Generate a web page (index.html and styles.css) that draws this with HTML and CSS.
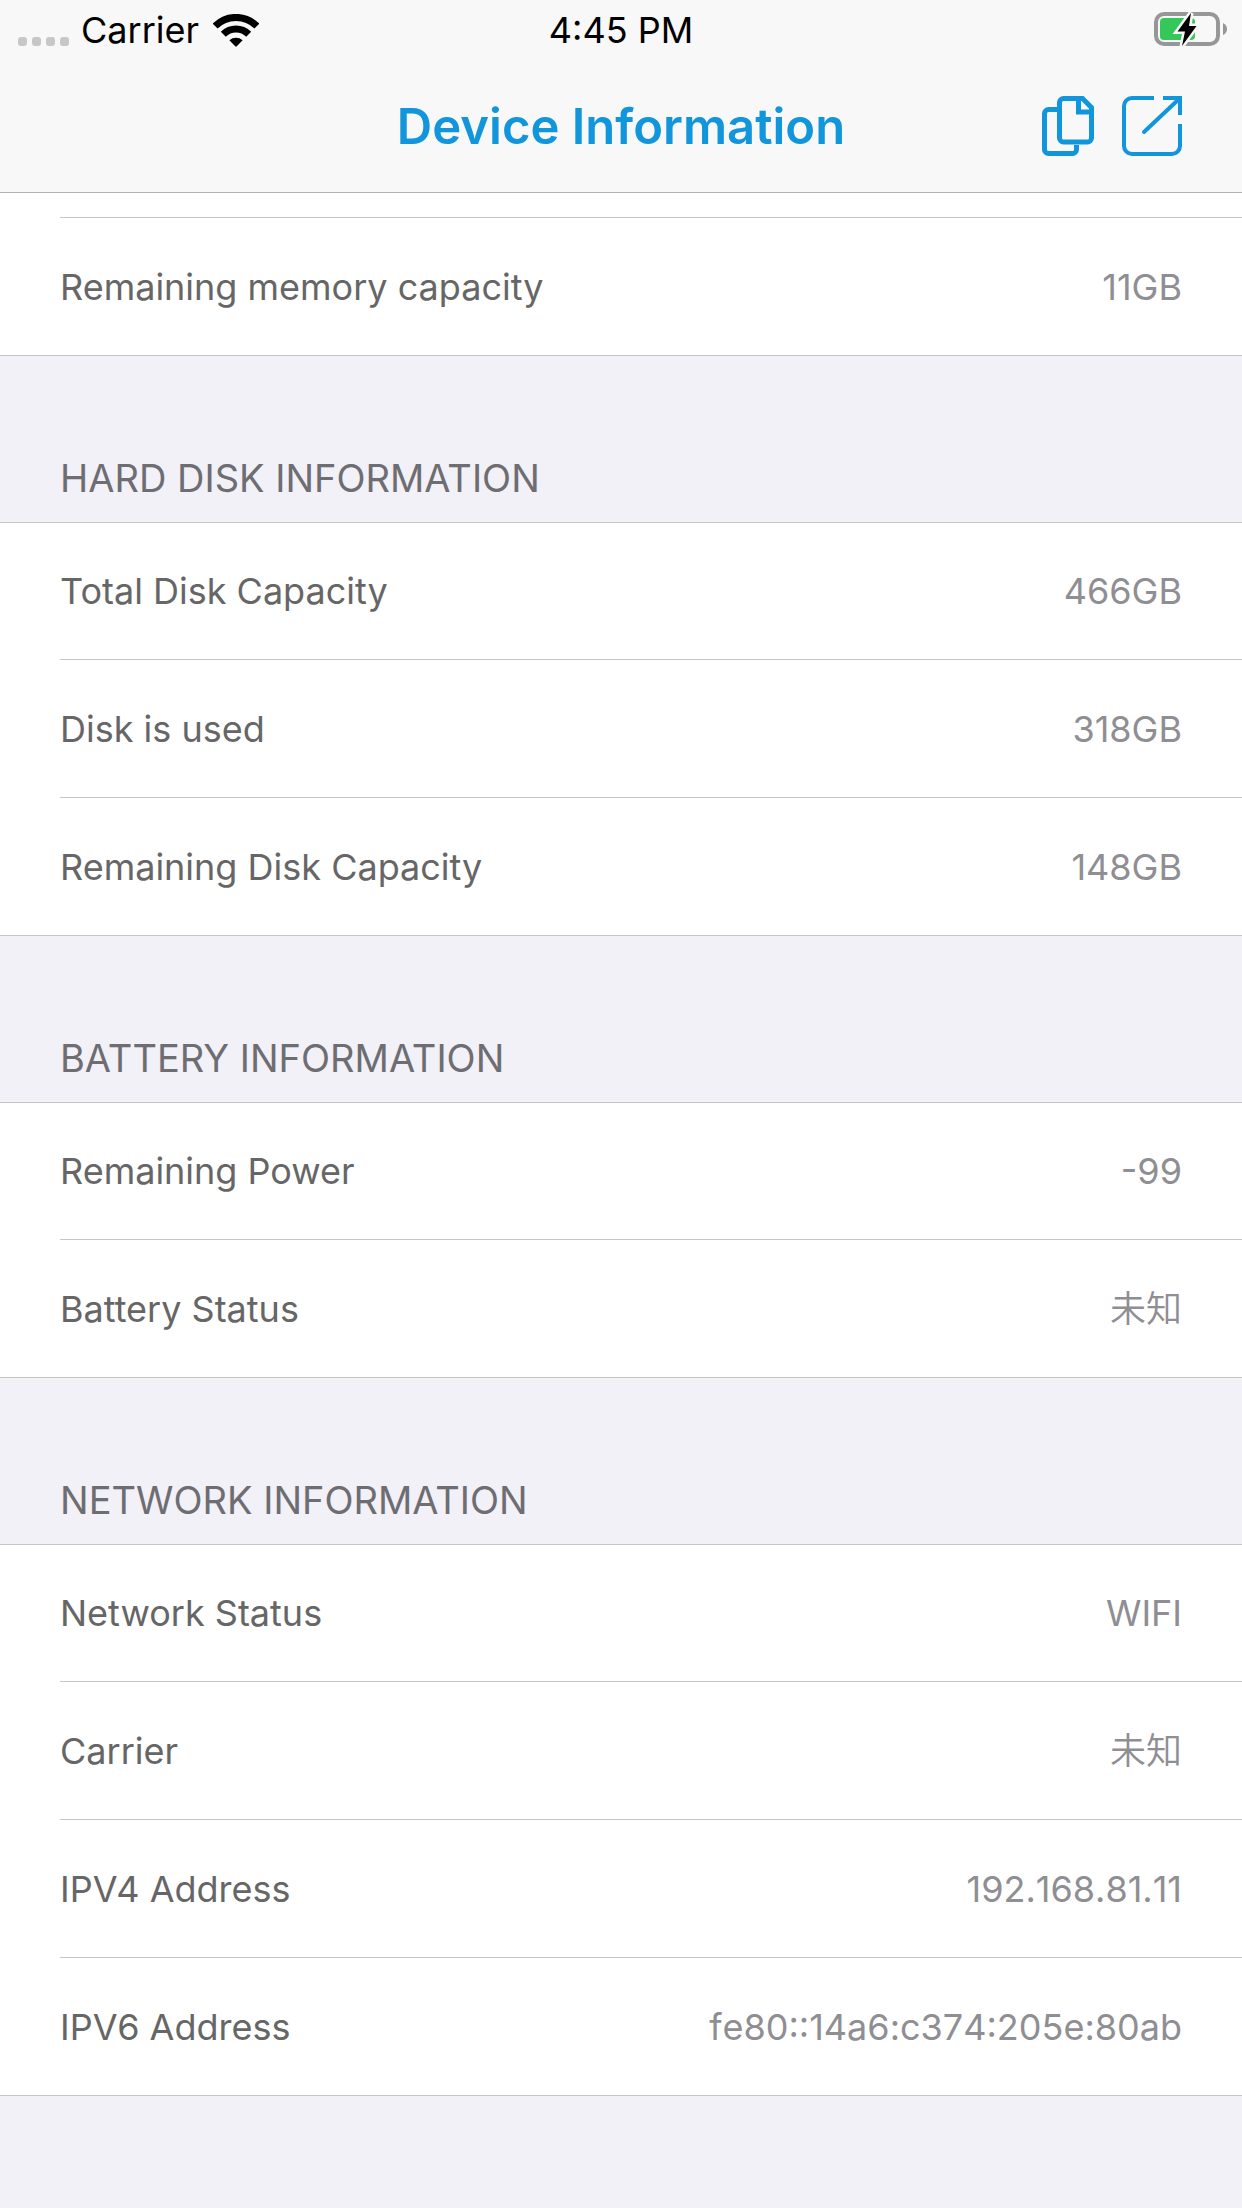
FILE: index.html
```html
<!DOCTYPE html>
<html lang="en">
<head>
<meta charset="utf-8">
<meta name="viewport" content="width=device-width, initial-scale=1">
<title>Device Information</title>
<link rel="stylesheet" href="styles.css">
</head>
<body>
<header class="top">
  <div class="status">
    <div class="status-left">
      <span class="signal"><i class="dot"></i><i class="dot"></i><i class="dot"></i><i class="dot"></i></span>
      <span>Carrier</span>
      <svg class="wifi" width="46" height="33" viewBox="0 0 46 33" aria-hidden="true">
        <g fill="none" stroke="#000" stroke-width="7">
          <path d="M2.1 12.1A29.5 29.5 0 0 1 43.9 12.1"/>
          <path d="M10.3 20.3A18 18 0 0 1 35.7 20.3"/>
        </g>
        <path d="M16.4 26.2A10 10 0 0 1 29.6 26.2L23.8 32.2Q23 33 22.2 32.2Z"/>
      </svg>
    </div>
    <span class="time">4:45 PM</span>
    <div class="status-right">
      <svg width="74" height="36" viewBox="0 0 74 36" aria-hidden="true">
        <rect x="2" y="2" width="62" height="30" rx="8" fill="none" stroke="#979797" stroke-width="4"/>
        <path d="M69 11Q73 13 73 17T69 23Z" fill="#979797"/>
        <rect x="6" y="6" width="35" height="22" rx="4" fill="#34c759"/>
        <path d="M37 1L23.5 19.5H31L28 34L42.5 14H35Z" fill="#000" stroke="#f8f8f8" stroke-width="5" paint-order="stroke"/>
      </svg>
    </div>
  </div>
  <div class="nav">
    <h1 class="title">Device Information</h1>
    <div class="actions">
      <button class="action" type="button" aria-label="Copy">
        <svg width="52" height="60" viewBox="0 0 52 60" fill="none" stroke="#1296db" stroke-width="5">
          <path d="M15 13.5H6.5a4 4 0 0 0-4 4V53.5a4 4 0 0 0 4 4H30.5a4 4 0 0 0 4-4V49"/>
          <path d="M21.5 2.5H40.5L49.5 11.5V42a4 4 0 0 1-4 4H21.5a4 4 0 0 1-4-4V6.5a4 4 0 0 1 4-4Z"/>
          <path d="M36.5 2.5V16H49.5"/>
        </svg>
      </button>
      <button class="action" type="button" aria-label="Share">
        <svg width="60" height="60" viewBox="0 0 60 60" fill="none" stroke="#1296db" stroke-width="4">
          <path d="M32 2H10a8 8 0 0 0-8 8V50a8 8 0 0 0 8 8H50a8 8 0 0 0 8-8V28"/>
          <path d="M41 2H58V19"/>
          <path d="M22 36L57 3" stroke-linecap="round"/>
        </svg>
      </button>
    </div>
  </div>
</header>
<main>
  <section class="memory">
    <dl class="group">
      <div class="row"><dt>Remaining memory capacity</dt><dd>11GB</dd></div>
    </dl>
  </section>
  <section>
    <h2 class="heading">HARD DISK INFORMATION</h2>
    <dl class="group lined">
      <div class="row"><dt>Total Disk Capacity</dt><dd>466GB</dd></div>
      <div class="row"><dt>Disk is used</dt><dd>318GB</dd></div>
      <div class="row"><dt>Remaining Disk Capacity</dt><dd>148GB</dd></div>
    </dl>
  </section>
  <section>
    <h2 class="heading">BATTERY INFORMATION</h2>
    <dl class="group lined">
      <div class="row"><dt>Remaining Power</dt><dd>-99</dd></div>
      <div class="row"><dt>Battery Status</dt><dd lang="zh-CN">未知</dd></div>
    </dl>
  </section>
  <section>
    <h2 class="heading">NETWORK INFORMATION</h2>
    <dl class="group lined">
      <div class="row"><dt>Network Status</dt><dd>WIFI</dd></div>
      <div class="row"><dt>Carrier</dt><dd lang="zh-CN">未知</dd></div>
      <div class="row"><dt>IPV4 Address</dt><dd>192.168.81.11</dd></div>
      <div class="row"><dt>IPV6 Address</dt><dd>fe80::14a6:c374:205e:80ab</dd></div>
    </dl>
  </section>
</main>
</body>
</html>
```
FILE: styles.css
```css
* { box-sizing: border-box; }

body {
  margin: 0;
  background: #f2f1f7;
  font-family: Inter, "Noto Sans CJK SC", sans-serif;
  font-size: 36px;
  line-height: 44px;
}

/* Status bar and navigation bar */
.top {
  background: #f8f8f8;
  border-bottom: 1px solid #b2b2b2;
}

.status {
  display: grid;
  grid-template-columns: 1fr auto 1fr;
  align-items: center;
  height: 60px;
  padding: 0 14px;
  color: #000;
}

.status-left { display: flex; align-items: center; gap: 12px; padding-left: 4px; }
.status-right { display: flex; justify-content: flex-end; }
.signal { display: flex; gap: 5px; padding-top: 22px; }
.dot { width: 9px; height: 9px; border-radius: 3px; background: #c7c7c7; }
.wifi { margin-left: 2px; }

.nav {
  display: grid;
  grid-template-columns: 1fr auto 1fr;
  align-items: center;
  height: 132px;
  padding: 0 60px;
}

.title {
  grid-column: 2;
  margin: 0;
  padding-top: 2px;
  color: #1296db;
  font-size: 49px;
  font-weight: 600;
  line-height: 60px;
}

.actions { display: flex; justify-content: flex-end; gap: 28px; }
.action { display: flex; padding: 0; border: 0; background: none; cursor: pointer; }

/* Grouped list */
.memory .group { padding-top: 24px; }

.memory .group::before {
  content: "";
  display: block;
  height: 1px;
  margin-left: 60px;
  background: #c6c6c8;
}

.heading {
  display: flex;
  align-items: flex-end;
  min-height: 166px;
  margin: 0;
  padding: 0 60px 21px;
  color: #6d6d72;
  font-size: 38px;
  font-weight: 400;
  line-height: 46px;
}

.group { margin: 0; background: #fff; }
.lined { box-shadow: inset 0 1px #c6c6c8; }

.row {
  display: flex;
  justify-content: space-between;
  align-items: center;
  min-height: 138px;
  margin-left: 60px;
  padding-right: 60px;
  border-bottom: 1px solid #c6c6c8;
}

.row:last-child { margin-left: 0; padding-left: 60px; }
.row dt { color: #666; }
.row dd { margin: 0; color: #8e8e93; font-kerning: none; }
.row dd:lang(zh) { font-weight: 350; }
```
